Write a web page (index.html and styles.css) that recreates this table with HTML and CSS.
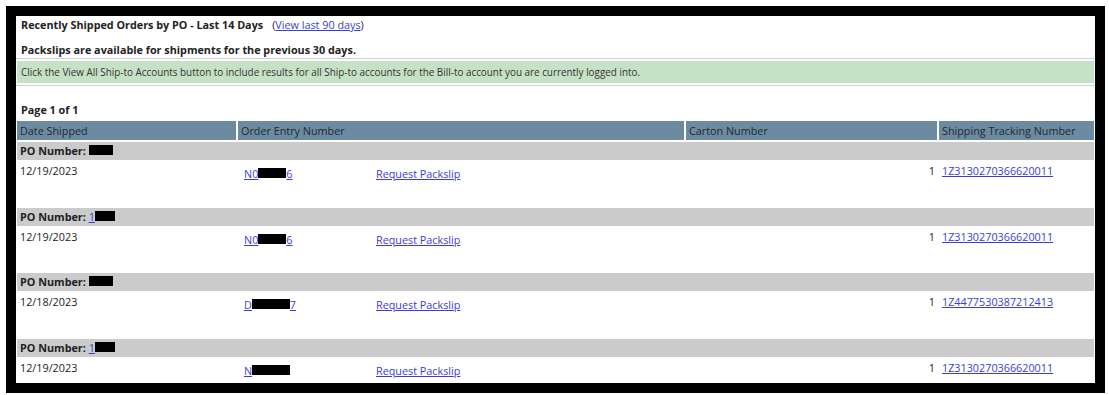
FILE: index.html
```html
<!DOCTYPE html>
<html>
<head>
<meta charset="utf-8">
<link rel="stylesheet" href="styles.css">
</head>
<body>
<div class="frame">
  <div class="title-line"><span class="title">Recently Shipped Orders by PO - Last 14 Days</span><span class="paren">(<a href="#">View last 90 days</a>)</span></div>
  <div class="note">Packslips are available for shipments for the previous 30 days.</div>
  <div class="info-wrap"><div class="info">Click the View All Ship-to Accounts button to include results for all Ship-to accounts for the Bill-to account you are currently logged into.</div></div>
  <div class="page">Page 1 of 1</div>
  <table class="orders">
    <thead>
      <tr>
        <th class="c-date">Date Shipped</th>
        <th class="c-order">Order Entry Number</th>
        <th class="c-carton">Carton Number</th>
        <th class="c-track">Shipping Tracking Number</th>
      </tr>
    </thead>
    <tbody>
      <tr class="po"><td colspan="4"><b>PO Number:</b> <a href="#" class="po-link"><span class="redact r-po1">1000</span></a></td></tr>
      <tr class="data">
        <td>12/19/2023</td>
        <td><div class="order-cell"><a href="#" class="ord">N0<span class="redact r-o1">0000</span>6</a><a href="#">Request Packslip</a></div></td>
        <td class="num">1</td>
        <td><a href="#">1Z3130270366620011</a></td>
      </tr>
      <tr class="po"><td colspan="4"><b>PO Number:</b> <a href="#" class="po-link">1<span class="redact r-po2">000</span></a></td></tr>
      <tr class="data">
        <td>12/19/2023</td>
        <td><div class="order-cell"><a href="#" class="ord">N0<span class="redact r-o1">0000</span>6</a><a href="#">Request Packslip</a></div></td>
        <td class="num">1</td>
        <td><a href="#">1Z3130270366620011</a></td>
      </tr>
      <tr class="po"><td colspan="4"><b>PO Number:</b> <a href="#" class="po-link"><span class="redact r-po1">1000</span></a></td></tr>
      <tr class="data">
        <td>12/18/2023</td>
        <td><div class="order-cell"><a href="#" class="ord">D<span class="redact r-o3">00000</span>7</a><a href="#">Request Packslip</a></div></td>
        <td class="num">1</td>
        <td><a href="#">1Z4477530387212413</a></td>
      </tr>
      <tr class="po"><td colspan="4"><b>PO Number:</b> <a href="#" class="po-link">1<span class="redact r-po2">000</span></a></td></tr>
      <tr class="data">
        <td>12/19/2023</td>
        <td><div class="order-cell"><a href="#" class="ord">N<span class="redact r-o4">000000</span></a><a href="#">Request Packslip</a></div></td>
        <td class="num">1</td>
        <td><a href="#">1Z3130270366620011</a></td>
      </tr>
    </tbody>
  </table>
</div>
</body>
</html>
```

FILE: styles.css
```css
html, body {
  margin: 0;
  padding: 0;
  background: #fff;
}
body {
  padding: 6px;
  font-family: "Open Sans", "DejaVu Sans", sans-serif;
  font-size: 10.8px;
  color: #222;
}
.frame {
  width: 1079px;
  height: 367px;
  border: 10px solid #000;
  overflow: hidden;
  background: #fff;
}
a {
  color: #3c3cd8;
  text-decoration: underline;
}
.title-line {
  padding: 2px 5px 0;
  line-height: 14px;
}
.title {
  font-weight: 700;
  margin-right: 9px;
}
.note {
  font-weight: 700;
  padding: 11px 5px 0;
  line-height: 14px;
}
.info-wrap {
  margin-top: 1px;
  border-top: 1px solid #cfcfcf;
  border-bottom: 1px solid #cfcfcf;
  padding: 2px 1px;
}
.info {
  background: #c6e2c6;
  height: 22px;
  line-height: 22px;
  padding-left: 4px;
  color: #333;
  font-size: 9.9px;
}
.page {
  font-weight: 700;
  padding: 17px 5px 0;
  line-height: 14px;
}
.orders {
  width: calc(100% + 2px);
  margin-left: -1px;
  border-collapse: separate;
  border-spacing: 2px;
  margin-top: 2px;
  table-layout: fixed;
}
.orders th {
  background: #6d8ba0;
  color: #1d2833;
  font-weight: 400;
  text-align: left;
  height: 19px;
  padding: 0 3px;
  line-height: 19px;
  box-sizing: border-box;
}
.c-date { width: 219px; }
.c-order { width: 446px; }
.c-carton { width: 251px; }
.c-track { padding-left: 4px; }
.orders td {
  padding: 0 3px;
  vertical-align: top;
}
.po td {
  background: #cbcbcb;
  height: 18px;
  line-height: 18px;
  padding: 0 3px;
}
.po b {
  font-weight: 700;
}
.data td {
  height: 42.7px;
  padding-top: 1px;
  line-height: 15px;
}
.order-cell {
  display: flex;
  padding: 3px 0 0 3px;
}
.ord {
  width: 132px;
}
.num {
  text-align: right;
}
.orders td.num {
  padding-right: 2px;
}
.redact {
  display: inline-block;
  background: #000;
  color: #000;
  height: 10px;
  line-height: 10px;
  vertical-align: 0;
  overflow: hidden;
}
.r-po1 { width: 24px; }
.r-po2 { width: 20px; }
.r-o1 { width: 28px; }
.r-o3 { width: 38px; }
.r-o4 { width: 38px; }
```
